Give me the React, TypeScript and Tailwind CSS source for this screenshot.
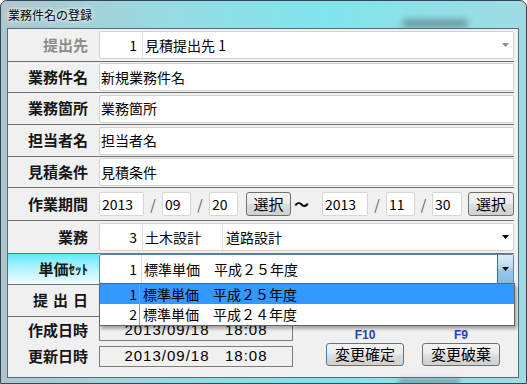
import type { ReactNode } from "react";

const box = "h-[28px] w-full bg-white border border-[#d2d2d2] rounded-[2px] text-[14px]";
const btn =
  "flex items-center justify-center rounded-[3px] border border-[#707070] bg-[linear-gradient(#f3f3f3_0%,#ebebeb_48%,#dddddd_52%,#cfcfcf_100%)] text-[15px]";

function Tri({ color = "#000" }: { color?: string }) {
  return (
    <svg width="7" height="4" viewBox="0 0 7 4">
      <path d="M0 0H7L3.5 4Z" fill={color} />
    </svg>
  );
}

function Row({
  h,
  label,
  labelCls = "",
  children,
}: {
  h: string;
  label: ReactNode;
  labelCls?: string;
  children?: ReactNode;
}) {
  return (
    <div className={`flex ${h} border-b border-[#707070]`}>
      <div
        className={`flex w-[91px] shrink-0 items-center justify-end pr-[11px] text-[15px] font-bold text-[#151515] ${labelCls}`}
      >
        {label}
      </div>
      <div className="flex flex-1 items-center">{children}</div>
    </div>
  );
}

function DateBox({ w, children }: { w: string; children: ReactNode }) {
  return (
    <div className={`flex h-[24px] ${w} shrink-0 items-center rounded-[2px] border border-[#d6d6d6] bg-white pl-[2px] text-[14px]`}>
      {children}
    </div>
  );
}

function Slash({ w }: { w: string }) {
  return <div className={`${w} shrink-0 text-center text-[14px] text-[#555]`}>/</div>;
}

export default function App() {
  return (
    <div className="relative h-[384px] w-[527px] overflow-hidden bg-white font-['Noto_Sans_CJK_JP','Noto_Sans',sans-serif] text-black">
      <div className="flex h-full w-full flex-col rounded-t-[7px] border border-[#34465a] bg-[linear-gradient(90deg,#aec6cb_0%,#98dbe2_30%,#80e5ec_62%,#9edce2_100%)] pb-[5px] pl-[6px] pr-[7px]">
        {/* title bar */}
        <div className="relative flex h-[27px] items-center pl-[1px] text-[12px] [text-shadow:0_0_6px_#fff,0_0_3px_#fff]">
          業務件名の登録
          <div className="absolute left-[395px] top-[18px] h-[9px] w-[66px] rounded-full bg-[#4c5c62]/50 blur-[3px]" />
        </div>

        {/* client */}
        <div className="relative flex-1 border border-[#56687a] bg-[#f0f0f0] pr-[4px]">
          <Row h="h-[33px]" label="提出先" labelCls="!text-[#8c8c8c]">
            <div className={`${box} flex items-stretch`}>
              <div className="flex w-[43px] items-center justify-end border-r border-[#dadada] pr-[5px]">1</div>
              <div className="flex flex-1 items-center pl-[2px]">見積提出先 1</div>
              <div className="flex w-[14px] items-center justify-center pr-[2px]">
                <Tri color="#8f8f8f" />
              </div>
            </div>
          </Row>
          <Row h="h-[31px]" label="業務件名">
            <div className={`${box} flex items-center pl-[1px]`}>新規業務件名</div>
          </Row>
          <Row h="h-[32px]" label="業務箇所">
            <div className={`${box} flex items-center pl-[1px]`}>業務箇所</div>
          </Row>
          <Row h="h-[32px]" label="担当者名">
            <div className={`${box} flex items-center pl-[1px]`}>担当者名</div>
          </Row>
          <Row h="h-[31px]" label="見積条件">
            <div className={`${box} flex items-center pl-[1px]`}>見積条件</div>
          </Row>
          <Row h="h-[33px]" label="作業期間">
            <DateBox w="w-[45px]">2013</DateBox>
            <Slash w="w-[18px]" />
            <DateBox w="w-[29px]">09</DateBox>
            <Slash w="w-[18px]" />
            <DateBox w="w-[29px]">20</DateBox>
            <button className={`${btn} ml-[8px] h-[24px] w-[45px] shrink-0`}>選択</button>
            <div className="w-[31px] shrink-0 pl-[3px] text-[15px] font-bold">～</div>
            <DateBox w="w-[46px]">2013</DateBox>
            <Slash w="w-[18px]" />
            <DateBox w="w-[29px]">11</DateBox>
            <Slash w="w-[17px]" />
            <DateBox w="w-[30px]">30</DateBox>
            <button className={`${btn} ml-[6px] h-[24px] w-[46px] shrink-0`}>選択</button>
          </Row>
          <Row h="h-[33px]" label="業務">
            <div className={`${box} flex items-stretch`}>
              <div className="flex w-[43px] items-center justify-end border-r border-[#dadada] pr-[5px]">3</div>
              <div className="flex w-[80px] items-center border-r border-[#dadada] pl-[2px]">土木設計</div>
              <div className="flex flex-1 items-center pl-[3px]">道路設計</div>
              <div className="flex w-[14px] items-center justify-center pr-[2px]">
                <Tri />
              </div>
            </div>
          </Row>
          <Row
            h="h-[31px]"
            label={
              <>
                <span>単価</span>
                <span className="text-[13px]">ｾｯﾄ</span>
              </>
            }
            labelCls="bg-linear-to-b from-[#5fe8f8] to-[#effdff]"
          >
            <div className="flex h-[30px] w-full items-stretch rounded-[2px] border border-[#5b89ad] bg-white text-[14px]">
              <div className="flex w-[42px] items-center justify-end border-r border-[#dadada] pr-[4px]">1</div>
              <div className="flex flex-1 items-center pl-[2px]">標準単価　平成２５年度</div>
              <div className="flex w-[16px] items-center justify-center border-l border-[#3f6d8d] bg-[linear-gradient(#dcecf8_0%,#b8d9f0_45%,#98c8ea_55%,#86bce2_100%)]">
                <Tri />
              </div>
            </div>
          </Row>
          <Row h="h-[32px]" label={<span className="mr-[-5px] tracking-[5px]">提出日</span>} />

          <div className="flex h-[26px] items-center">
            <div className="flex w-[91px] shrink-0 justify-end pr-[11px] text-[15px] font-bold text-[#151515]">作成日時</div>
            <div className="flex h-[21px] w-[194px] shrink-0 items-center justify-center whitespace-pre border border-[#7d7d7d] font-['Liberation_Sans',sans-serif] text-[15px] tracking-[1px]">
              2013/09/18   18:08
            </div>
            <div className="ml-[33px] mt-[9px] w-[78px] text-center font-['Liberation_Sans',sans-serif] text-[12px] font-bold text-[#2442b8]">
              F10
            </div>
            <div className="ml-[18px] mt-[9px] w-[78px] text-center font-['Liberation_Sans',sans-serif] text-[12px] font-bold text-[#2442b8]">
              F9
            </div>
          </div>
          <div className="flex h-[26px] items-center">
            <div className="flex w-[91px] shrink-0 justify-end pr-[11px] text-[15px] font-bold text-[#151515]">更新日時</div>
            <div className="flex h-[21px] w-[194px] shrink-0 items-center justify-center whitespace-pre border border-[#7d7d7d] font-['Liberation_Sans',sans-serif] text-[15px] tracking-[1px]">
              2013/09/18   18:08
            </div>
            <button className={`${btn} ml-[33px] h-[23px] w-[78px] shrink-0 self-start !border-[#3c7fb1]`}>変更確定</button>
            <button className={`${btn} ml-[18px] h-[23px] w-[78px] shrink-0 self-start`}>変更破棄</button>
          </div>

          {/* opened dropdown list */}
          <div className="absolute left-[91px] top-[254px] z-10 w-[416px] border border-[#646464] bg-white text-[14px] shadow-[2px_3px_3px_rgba(0,0,0,0.3)]">
            <div className="flex h-[20px] items-center bg-[#3399ff]">
              <div className="w-[40px] border-r border-[#9a9a9a] pr-[2px] text-right">1</div>
              <div className="pl-[3px]">標準単価　平成２５年度</div>
            </div>
            <div className="flex h-[21px] items-center">
              <div className="w-[40px] border-r border-[#9a9a9a] pr-[2px] text-right">2</div>
              <div className="pl-[3px]">標準単価　平成２４年度</div>
            </div>
          </div>
        </div>
      </div>
      <div className="absolute bottom-[0px] left-[398px] h-[5px] w-[62px] rounded-full bg-[#5a666a]/50 blur-[2px]" />
    </div>
  );
}
